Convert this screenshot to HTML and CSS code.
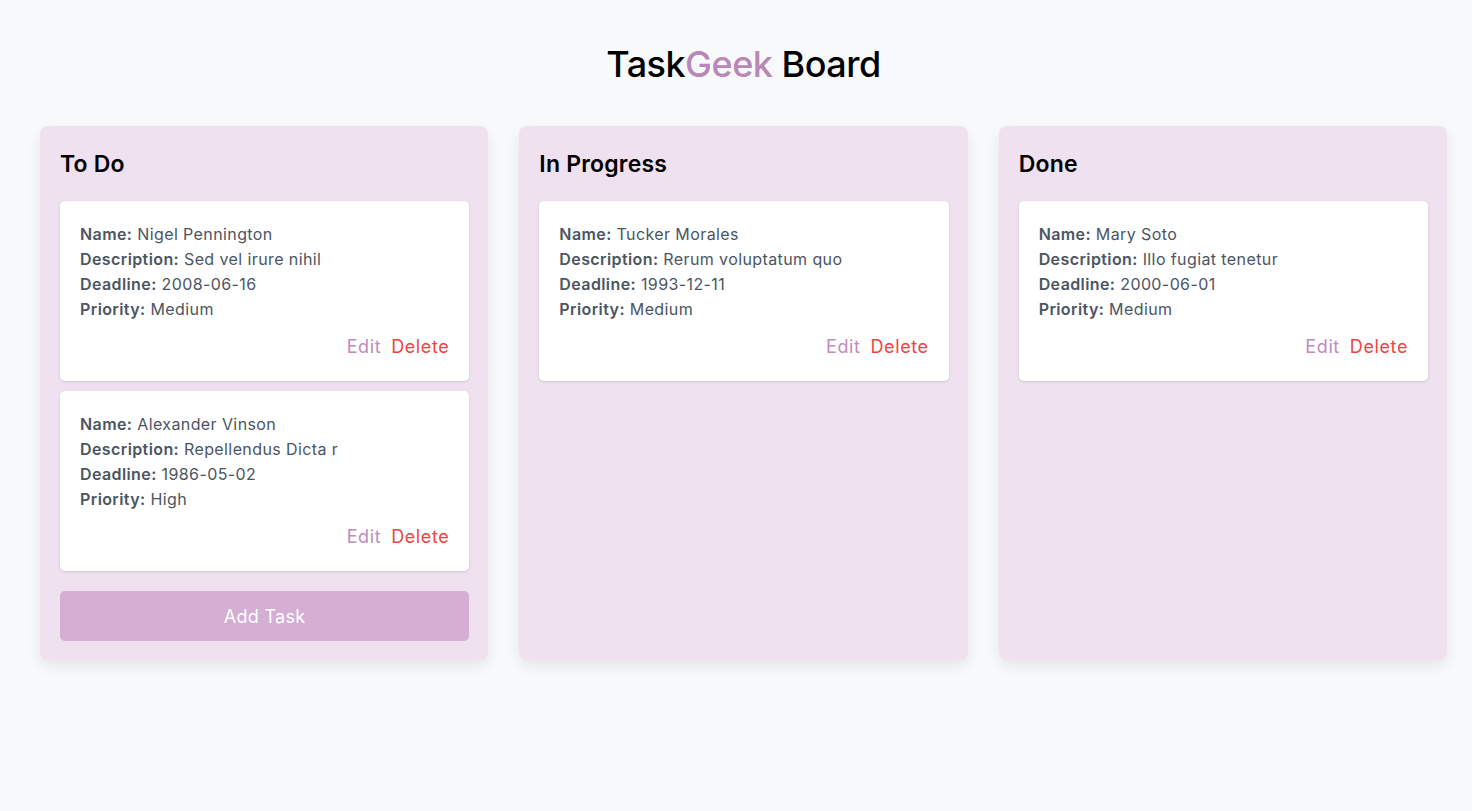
FILE: index.html
```html
<!DOCTYPE html>
<html lang="en">
<head>
<meta charset="utf-8">
<title>TaskGeek Board</title>
<link rel="stylesheet" href="styles.css">
</head>
<body>
<main class="page">
  <h1 class="title">Task<span class="accent">Geek</span> Board</h1>
  <div class="board">
    <section class="column">
      <h2 class="column-title">To Do</h2>
      <div class="card">
        <p><b>Name:</b> Nigel Pennington</p>
        <p><b>Description:</b> Sed vel irure nihil</p>
        <p><b>Deadline:</b> 2008-06-16</p>
        <p><b>Priority:</b> Medium</p>
        <div class="actions"><button class="edit">Edit</button><button class="delete">Delete</button></div>
      </div>
      <div class="card">
        <p><b>Name:</b> Alexander Vinson</p>
        <p><b>Description:</b> Repellendus Dicta r</p>
        <p><b>Deadline:</b> 1986-05-02</p>
        <p><b>Priority:</b> High</p>
        <div class="actions"><button class="edit">Edit</button><button class="delete">Delete</button></div>
      </div>
      <button class="add">Add Task</button>
    </section>
    <section class="column">
      <h2 class="column-title">In Progress</h2>
      <div class="card">
        <p><b>Name:</b> Tucker Morales</p>
        <p><b>Description:</b> Rerum voluptatum quo</p>
        <p><b>Deadline:</b> 1993-12-11</p>
        <p><b>Priority:</b> Medium</p>
        <div class="actions"><button class="edit">Edit</button><button class="delete">Delete</button></div>
      </div>
    </section>
    <section class="column">
      <h2 class="column-title">Done</h2>
      <div class="card">
        <p><b>Name:</b> Mary Soto</p>
        <p><b>Description:</b> Illo fugiat tenetur</p>
        <p><b>Deadline:</b> 2000-06-01</p>
        <p><b>Priority:</b> Medium</p>
        <div class="actions"><button class="edit">Edit</button><button class="delete">Delete</button></div>
      </div>
    </section>
  </div>
</main>
</body>
</html>
```

FILE: styles.css
```css
* { box-sizing: border-box; }
html, body { margin: 0; padding: 0; }
body {
  background: #f8f9fb;
  font-family: "Inter", "Noto Sans", sans-serif;
  color: #000;
  min-height: 811px;
}
.page {
  padding: 42px 25px 0 40px;
}
.title {
  margin: 0 0 40px;
  text-align: center;
  font-size: 36px;
  line-height: 44px;
  font-weight: 500;
  letter-spacing: -0.5px;
}
.accent { color: #b987b8; }
.board {
  display: grid;
  grid-template-columns: repeat(3, 1fr);
  column-gap: 31px;
}
.column {
  background: #efe1ef;
  border-radius: 8px;
  padding: 20px 19px 19px 20px;
  box-shadow: 0 6px 14px rgba(0,0,0,0.08);
  display: flex;
  flex-direction: column;
  min-height: 534px;
}
.column-title {
  margin: 0 0 19px;
  font-size: 23px;
  line-height: 36px;
  font-weight: 600;
  letter-spacing: 0.2px;
}
.card {
  background: #fff;
  border-radius: 5px;
  padding: 21px 20px 19px;
  box-shadow: 0 1px 3px rgba(0,0,0,0.12);
  margin-bottom: 10px;
  height: 180px;
}
.card p {
  margin: 0;
  font-size: 16px;
  line-height: 25px;
  color: #4b5563;
  letter-spacing: 0.4px;
}
.card b { font-weight: 600; color: #4b5563; }
.actions {
  display: flex;
  justify-content: flex-end;
  gap: 10px;
  margin-top: 11px;
}
.actions button {
  background: none;
  border: 0;
  padding: 0;
  font-family: inherit;
  font-size: 18px;
  line-height: 27px;
  letter-spacing: 0.6px;
}
.edit { color: #c08bbd; }
.delete { color: #ef4444; }
.add {
  margin-top: 10px;
  height: 50px;
  border: 0;
  border-radius: 5px;
  background: #d4afd3;
  color: #fff;
  font-family: inherit;
  font-size: 18px;
  letter-spacing: 0.3px;
}
```
